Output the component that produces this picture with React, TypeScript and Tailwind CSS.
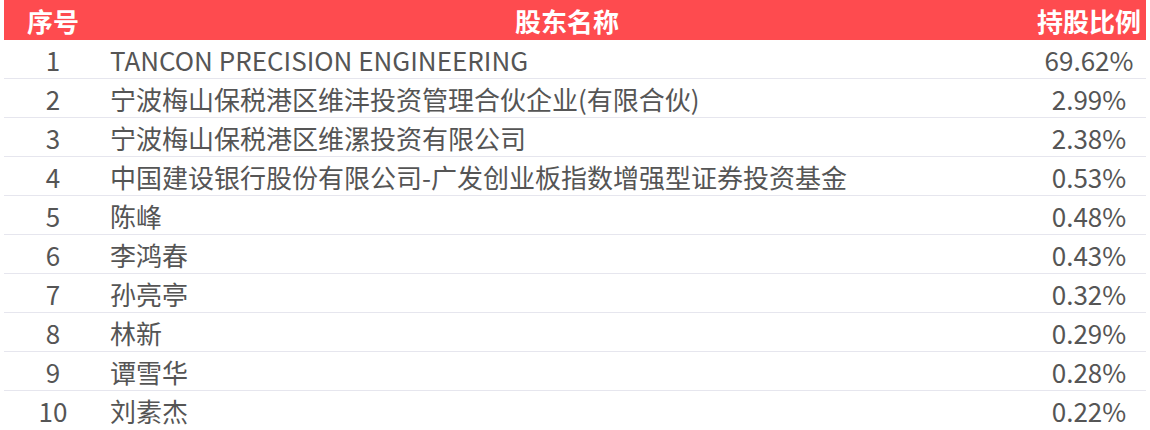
import React from 'react';

const rows: [string, string][] = [
  ['TANCON PRECISION ENGINEERING', '69.62%'],
  ['宁波梅山保税港区维沣投资管理合伙企业(有限合伙)', '2.99%'],
  ['宁波梅山保税港区维漯投资有限公司', '2.38%'],
  ['中国建设银行股份有限公司-广发创业板指数增强型证券投资基金', '0.53%'],
  ['陈峰', '0.48%'],
  ['李鸿春', '0.43%'],
  ['孙亮亭', '0.32%'],
  ['林新', '0.29%'],
  ['谭雪华', '0.28%'],
  ['刘素杰', '0.22%'],
];

export default function App() {
  return (
    <div
      className="w-[1150px] h-[430px] bg-white px-[4px] overflow-hidden"
      style={{ fontFamily: '"Noto Sans CJK SC", "Noto Sans", sans-serif' }}
    >
      {/* Header */}
      <div className="flex items-center h-[40px] bg-[#fe4b4f] text-white font-bold text-[26px]">
        <div className="w-[98px] text-center">序号</div>
        <div className="flex-1 text-center">股东名称</div>
        <div className="w-[114px] text-center">持股比例</div>
      </div>

      {/* Rows */}
      {rows.map(([name, pct], i) => (
        <div
          key={i}
          className={`flex items-center h-[39px] text-[26px] text-[#555555] ${
            i < rows.length - 1 ? 'border-b border-[#e6e6ee]' : ''
          }`}
        >
          <div className="w-[98px] text-center">{i + 1}</div>
          <div className="flex-1 pl-[8px] whitespace-nowrap">{name}</div>
          <div className="w-[114px] text-center">{pct}</div>
        </div>
      ))}
    </div>
  );
}
